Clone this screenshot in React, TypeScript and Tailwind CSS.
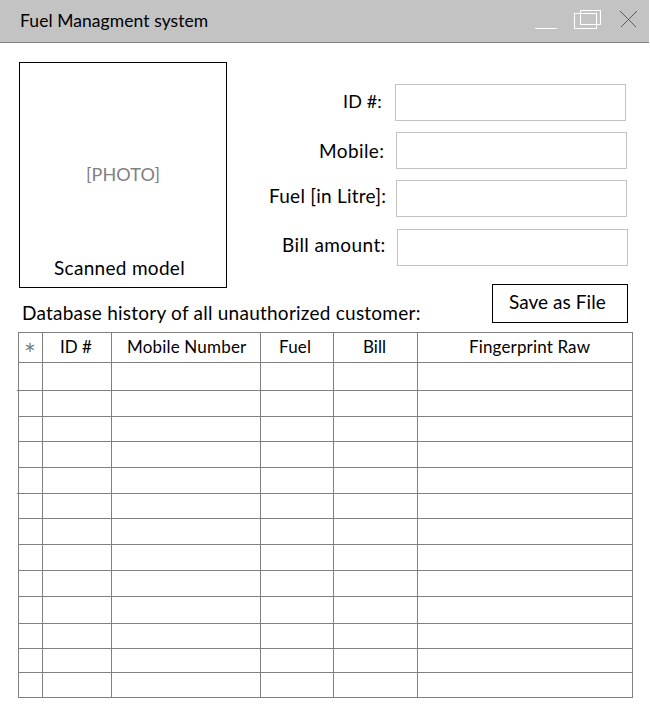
import React from "react";

const fields = [
  { label: "ID #:", row: "mt-0", pad: "pl-[92px]", text: "w-[52px]", track: "text-[18px] tracking-[0.1px]", labelTop: "pt-[5px]" },
  { label: "Mobile:", row: "mt-[11px]", pad: "pl-[68px]", text: "w-[77px]", track: "text-[19px] tracking-[0.4px]", labelTop: "pt-[7px]" },
  { label: "Fuel [in Litre]:", row: "mt-[11px]", pad: "pl-[18px]", text: "w-[127px]", track: "text-[19px] tracking-[0.24px]", labelTop: "pt-[4px]" },
  { label: "Bill amount:", row: "mt-[12px]", pad: "pl-[31px]", text: "w-[115px]", track: "text-[19px] tracking-[0.4px]", labelTop: "pt-[4px]" },
];

const columns = [
  { label: "*", width: "w-[24px]", cell: "pl-[5px] pt-[9px] text-[28px] text-[#808080]" },
  { label: "ID #", width: "w-[69px]", cell: "pl-[17px] pt-[2px] tracking-[0px]" },
  { label: "Mobile Number", width: "w-[149px]", cell: "pl-[15px] pt-[2px] tracking-[0.18px]" },
  { label: "Fuel", width: "w-[73px]", cell: "pl-[18px] pt-[2px] tracking-[0.2px]" },
  { label: "Bill", width: "w-[84px]", cell: "pl-[29px] pt-[2px] tracking-[0px]" },
  { label: "Fingerprint Raw", width: "w-[215px]", cell: "pl-[51px] pt-[2px] tracking-[0.15px]" },
];

const stub = "relative before:absolute before:-left-[2px] before:-bottom-px before:h-px before:w-px before:bg-[#808080] before:content-['']";

const rows = [
  `h-[28px] ${stub}`,
  "h-[26px]",
  "h-[25px]",
  "h-[26px]",
  `h-[26px] ${stub}`,
  "h-[25px]",
  "h-[26px]",
  "h-[26px]",
  "h-[26px]",
  "h-[27px]",
  "h-[25px]",
  "h-[24px]",
  "h-[25px]",
];

function TitleBar() {
  return (
    <header className="flex h-[43px] w-[649px] items-start justify-between border-b border-[#808080] bg-[#c3c3c3] pl-[20px] pr-[12px]">
      <h1 className="whitespace-nowrap pt-[9px] text-[17.5px] leading-[24px] tracking-[0.07px]">Fuel Managment system</h1>
      <svg width="102" height="20" viewBox="0 0 102 20" className="mt-[9px]" fill="none" shapeRendering="crispEdges">
        <path d="M0 19.5H22" stroke="#fff" />
        <rect x="45.5" y="1.5" width="20" height="14" stroke="#fff" />
        <rect x="39.5" y="4.5" width="22" height="15" stroke="#fff" />
        <path d="M85.5 2.5L101.5 18.5M101.5 2.5L85.5 18.5" stroke="#ed1c24" />
      </svg>
    </header>
  );
}

export default function App() {
  return (
    <div className="h-[710px] w-[650px] overflow-hidden bg-white font-['Lato','Liberation_Sans',sans-serif] text-black">
      <TitleBar />
      <main className="pl-[18px]">
        <div className="flex h-[289px]">
          <div className="w-[233px] shrink-0">
            <section className="ml-px mt-[19px] h-[226px] w-[208px] border border-black">
              <p className="whitespace-nowrap pl-[66px] pt-[99px] text-[18px] leading-[24px] tracking-[0.1px] text-[#808080]">[PHOTO]</p>
              <p className="whitespace-nowrap pl-[34px] pt-[70px] text-[19px] leading-[24px] tracking-[0.3px]">Scanned model</p>
            </section>
            <h2 className="whitespace-nowrap pl-[4px] pt-[13px] text-[19px] leading-[24px] tracking-[0.24px]">Database history of all unauthorized customer:</h2>
          </div>
          <form className="flex w-[399px] flex-col pt-[41px]">
            {fields.map((f) => (
              <label key={f.label} className={`flex h-[37px] ${f.row} ${f.pad}`}>
                <span className={`shrink-0 whitespace-nowrap leading-[24px] ${f.text} ${f.track} ${f.labelTop}`}>{f.label}</span>
                <input className="h-[37px] w-[231px] shrink-0 border border-[#c3c3c3] bg-white outline-none" />
              </label>
            ))}
            <button type="button" className="ml-[241px] mt-[18px] h-[39px] w-[136px] shrink-0 whitespace-nowrap border border-black pb-[4px] pl-[16px] text-left text-[19px] leading-[24px] tracking-[0.05px]">
              Save as File
            </button>
          </form>
        </div>
        <div className="w-[615px] border-l border-t border-[#808080] text-[17px] leading-[24px]">
          <div className="flex h-[30px] border-b border-[#808080]">
            {columns.map((c) => (
              <div key={c.label} className={`shrink-0 whitespace-nowrap border-r border-[#808080] leading-[24px] ${c.width} ${c.cell}`}>{c.label}</div>
            ))}
          </div>
          {rows.map((r, i) => (
            <div key={i} className={`flex border-b border-[#808080] ${r}`}>
              {columns.map((c) => (
                <div key={c.label} className={`shrink-0 border-r border-[#808080] ${c.width}`} />
              ))}
            </div>
          ))}
        </div>
      </main>
    </div>
  );
}
